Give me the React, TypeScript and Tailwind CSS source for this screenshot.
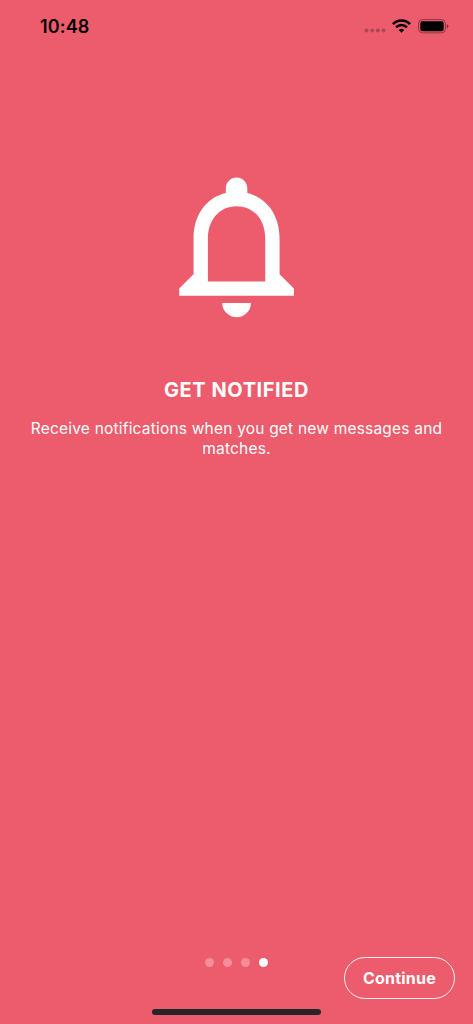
import React from "react";

function StatusBar() {
  return (
    <header className="flex h-[52px] shrink-0 items-center justify-between pl-[40px] pr-[24px] text-black">
      <time className="pt-px text-[18px] leading-[22px] font-semibold tracking-[0.15px]">10:48</time>
      <div className="flex h-[18px] items-center">
        <svg width="22" height="18" viewBox="0 0 22 18" className="fill-black/25">
          <circle cx="2.5" cy="13.5" r="2" />
          <circle cx="8.2" cy="13.5" r="2" />
          <circle cx="13.9" cy="13.5" r="2" />
          <circle cx="19.6" cy="13.5" r="2" />
        </svg>
        <svg width="19" height="14" viewBox="0 0 19 14" className="ml-[6px] fill-none stroke-black stroke-[2.6]">
          <path d="M1 5.1a12 12 0 0 1 17 0" />
          <path d="M4.1 8.2a7.7 7.7 0 0 1 10.8 0" />
          <path d="M9.5 13.7 6.8 11a3.8 3.8 0 0 1 5.4 0z" className="fill-black stroke-none" />
        </svg>
        <svg width="31" height="15" viewBox="0 0 31 15" className="ml-[7px]">
          <rect x=".6" y=".6" width="26.8" height="13.3" rx="4" className="fill-none stroke-black/40" />
          <rect x="2.3" y="2.3" width="23.4" height="9.9" rx="2.2" />
          <path d="M28.8 5a2.5 2.5 0 0 1 0 4.6z" className="fill-black/50" />
        </svg>
      </div>
    </header>
  );
}

function BellIcon() {
  return (
    <svg width="172" height="172" viewBox="0.06 0.06 24 24" fill="currentColor">
      <path d="M16 17H8v-6c0-2.48 1.51-4.5 4-4.5s4 2.02 4 4.5zm2-1v-5c0-3.07-1.64-5.64-4.5-6.32V4c0-.83-.67-1.5-1.5-1.5s-1.5.67-1.5 1.5v.68C7.63 5.36 6 7.92 6 11v5l-2 2v1h16v-1zM10 20h4a2 2 0 0 1-4 0z" />
    </svg>
  );
}

export default function App() {
  return (
    <div className="flex h-[1024px] w-[473px] flex-col overflow-hidden bg-[#ec5c6d] font-['Inter',sans-serif] text-white">
      <StatusBar />
      <main className="flex flex-1 flex-col items-center pt-[108px]">
        <BellIcon />
        <h1 className="mt-[45px] text-[20px] leading-[26px] font-bold tracking-[0.58px]">GET NOTIFIED</h1>
        <p className="mt-[16px] text-center text-[15.5px] leading-[19.5px] tracking-[0.2px]">
          Receive notifications when you get new messages and
          <br />
          matches.
        </p>
      </main>
      <footer className="grid h-[67px] shrink-0 grid-cols-[1fr_auto_1fr] content-start items-start">
        <div className="col-start-2 flex gap-[9.2px] pt-[0.5px]">
          <span className="size-[9px] rounded-full bg-white/30" />
          <span className="size-[9px] rounded-full bg-white/30" />
          <span className="size-[9px] rounded-full bg-white/30" />
          <span className="size-[9px] rounded-full bg-white" />
        </div>
        <button className="mr-[18px] h-[42px] w-[111px] justify-self-end rounded-full border border-white/90 text-[16px] font-bold tracking-[0.2px]">
          Continue
        </button>
        <div className="col-span-3 mt-[10px] h-[6px] w-[169px] justify-self-center rounded-full bg-[#282528]" />
      </footer>
    </div>
  );
}
